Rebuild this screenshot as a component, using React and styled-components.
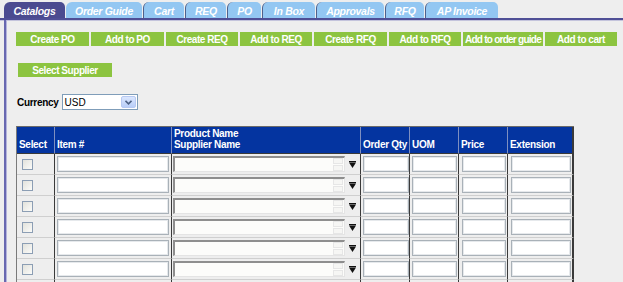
import React from "react";
import styled, { createGlobalStyle } from "styled-components";

const GlobalStyle = createGlobalStyle`
  html, body { margin: 0; padding: 0; overflow: hidden; background: #eeeeee; }
  body { font-family: "Liberation Sans", Arial, sans-serif; }
  * { box-sizing: border-box; }
`;

const Page = styled.div`
  width: 623px;
  height: 282px;
  overflow: hidden;
  background: #eeeeee;
`;

const TabBar = styled.div`
  display: flex;
  gap: 1px;
  height: 20px;
  padding: 2px 0 0 4px;
  border-bottom: 2px solid #4f4f96;
  box-shadow: 0 1px 0 #c4c4dc;
`;

const Tab = styled.div`
  width: ${(p) => p.$w}px;
  height: 16px;
  border-radius: 6px 5px 0 0;
  background: ${(p) => (p.$active ? "#4b4b90" : "#93c7f2")};
  color: #ffffff;
  font-size: 10.5px;
  font-weight: bold;
  font-style: italic;
  letter-spacing: -0.3px;
  display: flex;
  align-items: center;
  justify-content: center;
  padding-top: 1px;
  border-left: ${(p) => (p.$tick ? "1px solid #50608a" : "none")};
`;

const Panel = styled.div`
  margin-left: 4px;
  height: 262px;
  border-left: 2px solid #6868b0;
  box-shadow: inset 1px 0 0 #b4b4dc;
  padding: 12px 0 0 10px;
`;

const ButtonRow = styled.div`
  display: flex;
  gap: 2px;
`;

const GreenButton = styled.div`
  width: ${(p) => p.$w}px;
  height: 14px;
  background: #8cc440;
  color: #ffffff;
  font-size: 10px;
  font-weight: bold;
  letter-spacing: ${(p) => p.$ls ?? -0.45}px;
  display: flex;
  align-items: center;
  justify-content: center;
  white-space: nowrap;
  margin-left: ${(p) => p.$ml || 0}px;
`;

const SupplierRow = styled.div`
  margin-top: 17px;
  display: flex;
`;

const CurrencyRow = styled.div`
  margin-top: 17px;
  display: flex;
  align-items: center;
  gap: 3px;
  padding-left: 1px;
`;

const Label = styled.span`
  font-size: 10px;
  font-weight: bold;
  letter-spacing: -0.3px;
  color: #000;
`;

const SelectBox = styled.div`
  width: 76px;
  height: 16px;
  border: 1px solid #7f9db9;
  background: #ffffff;
  display: flex;
  align-items: center;
  justify-content: space-between;
  padding: 0 1px 0 2px;
  font-size: 10px;
  color: #000;
`;

const SelectArrow = styled.div`
  width: 15px;
  height: 12px;
  border: 1px solid #b7c9f2;
  border-radius: 2px;
  background: linear-gradient(#dbe6fe, #b8cdf8);
  display: flex;
  align-items: center;
  justify-content: center;
`;

const Table = styled.table`
  margin-top: 16px;
  width: 558px;
  table-layout: fixed;
  border-collapse: separate;
  border-spacing: 0;
  border-top: 1px solid #6a6a6a;
  border-left: 1px solid #7a7a7a;
`;

const Th = styled.th`
  width: ${(p) => p.$w}px;
  height: 27px;
  background: #0434a0;
  color: #ffffff;
  font-size: 10px;
  font-weight: bold;
  letter-spacing: -0.3px;
  text-align: left;
  vertical-align: bottom;
  line-height: 11px;
  padding: 0 2px 3px 2px;
  border-right: ${(p) => (p.$last ? "2px solid #3a3a3a" : "1px solid #7f8fc0")};
  border-bottom: 1px solid #3a3a3a;
`;

const Td = styled.td`
  height: 21px;
  padding: 0 0 0 ${(p) => p.$pl || 2}px;
  vertical-align: middle;
  background: #eeeeee;
  border-right: ${(p) => (p.$last ? "2px solid #3a3a3a" : "1px solid #3a3a3a")};
  border-bottom: 1px solid #cfcfcf;
`;

const Check = styled.div`
  width: 11px;
  height: 11px;
  margin-left: 4px;
  border: 1px solid #8c9eb4;
  background: linear-gradient(135deg, #e2e2dc, #fbfbf9);
`;

const TextInput = styled.div`
  width: ${(p) => p.$w}px;
  height: 16px;
  background: #ffffff;
  border: 1px solid #a9b1b8;
  box-shadow: inset 0 0 0 1px #e6e9ec;
`;

const ProductCell = styled.div`
  display: flex;
  align-items: center;
  gap: 4px;
`;

const TextArea = styled.div`
  width: 172px;
  height: 16px;
  background: #fcfcfa;
  border-style: solid;
  border-width: 2px 1px 1px 2px;
  border-color: #8e8e8e #e4e4e4 #e4e4e4 #8e8e8e;
  display: flex;
  justify-content: flex-end;
  padding-right: 1px;
`;

const ScrollArrows = styled.div`
  width: 10px;
  display: flex;
  flex-direction: column;
  gap: 1px;
`;

const ScrollBtn = styled.div`
  flex: 1;
  border: 1px solid #e6e6e6;
  background: #f6f6f4;
`;

const Caret = styled.svg`
  display: block;
  flex: none;
`;

const tabs = [
  { label: "Catalogs", w: 61, active: true },
  { label: "Order Guide", w: 76 },
  { label: "Cart", w: 41, tick: true },
  { label: "REQ", w: 41, tick: true },
  { label: "PO", w: 34, tick: true },
  { label: "In Box", w: 53, tick: true },
  { label: "Approvals", w: 68, tick: true },
  { label: "RFQ", w: 39, tick: true },
  { label: "AP Invoice", w: 73, tick: true },
];

const buttons = [
  { label: "Create PO", w: 73 },
  { label: "Add to PO", w: 73 },
  { label: "Create REQ", w: 72 },
  { label: "Add to REQ", w: 72 },
  { label: "Create RFQ", w: 73 },
  { label: "Add to RFQ", w: 72 },
  { label: "Add to order guide", w: 80, ls: -0.75 },
  { label: "Add to cart", w: 72 },
];

const rows = [0, 1, 2, 3, 4, 5, 6];

export default function App() {
  return (
    <Page>
      <GlobalStyle />
      <TabBar>
        {tabs.map((t) => (
          <Tab key={t.label} $w={t.w} $active={t.active} $tick={t.tick}>
            {t.label}
          </Tab>
        ))}
      </TabBar>
      <Panel>
        <ButtonRow>
          {buttons.map((b) => (
            <GreenButton key={b.label} $w={b.w} $ls={b.ls}>
              {b.label}
            </GreenButton>
          ))}
        </ButtonRow>
        <SupplierRow>
          <GreenButton $w={94} $ml={2}>
            Select Supplier
          </GreenButton>
        </SupplierRow>
        <CurrencyRow>
          <Label>Currency</Label>
          <SelectBox>
            <span>USD</span>
            <SelectArrow>
              <svg width="7" height="5" viewBox="0 0 7 5">
                <path d="M0.5 0.8 L3.5 3.8 L6.5 0.8" fill="none" stroke="#4d6185" strokeWidth="1.6" />
              </svg>
            </SelectArrow>
          </SelectBox>
        </CurrencyRow>
        <Table>
          <thead>
            <tr>
              <Th $w={38}>Select</Th>
              <Th $w={117}>Item #</Th>
              <Th $w={189}>
                Product Name
                <br />
                Supplier Name
              </Th>
              <Th $w={49}>Order Qty</Th>
              <Th $w={49}>UOM</Th>
              <Th $w={49}>Price</Th>
              <Th $w={66} $last>
                Extension
              </Th>
            </tr>
          </thead>
          <tbody>
            {rows.map((r) => (
              <tr key={r}>
                <Td $pl={1}>
                  <Check />
                </Td>
                <Td $pl={2}>
                  <TextInput $w={112} />
                </Td>
                <Td $pl={1}>
                  <ProductCell>
                    <TextArea>
                      <ScrollArrows>
                        <ScrollBtn />
                        <ScrollBtn />
                      </ScrollArrows>
                    </TextArea>
                    <Caret width="7" height="7" viewBox="0 0 7 7">
                      <rect x="0" y="0" width="7" height="1.2" fill="#111" />
                      <polygon points="0,1.5 7,1.5 3.5,7" fill="#111" />
                    </Caret>
                  </ProductCell>
                </Td>
                <Td $pl={2}>
                  <TextInput $w={46} />
                </Td>
                <Td $pl={2}>
                  <TextInput $w={45} />
                </Td>
                <Td $pl={3}>
                  <TextInput $w={44} />
                </Td>
                <Td $pl={3} $last>
                  <TextInput $w={60} />
                </Td>
              </tr>
            ))}
          </tbody>
        </Table>
      </Panel>
    </Page>
  );
}
